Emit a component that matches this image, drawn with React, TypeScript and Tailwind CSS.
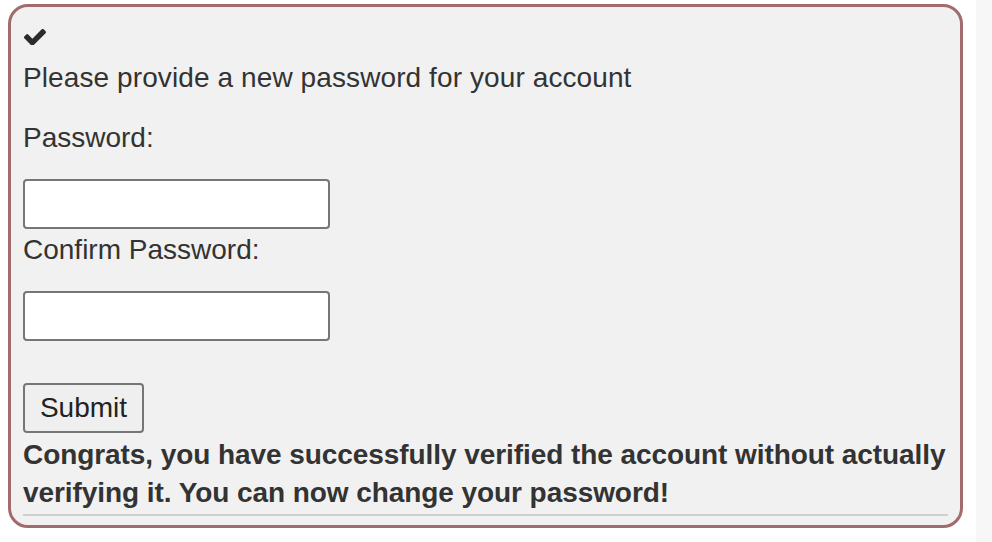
export default function App() {
	return (
		<div className="flex h-[542px] w-[992px] bg-white font-['Liberation_Sans',Arial,sans-serif] text-[#333]">
			<div className="pl-2 pt-1">
				<div className="w-[955px] rounded-[20px] border-[3px] border-[#a26c6c] bg-[#f1f1f1] px-3 pb-[9px]">
					<div className="h-[55px] pt-[22px] pl-[1px]">
						<svg viewBox="128 372 1543 1056" className="h-[16px] w-[22px] fill-[#2b2b2b]">
							<path d="M1671 566q0 40-28 68l-724 724-136 136q-28 28-68 28t-68-28l-136-136-362-362q-28-28-28-68t28-68l136-136q28-28 68-28t68 28l294 295 656-657q28-28 68-28t68 28l136 136q28 28 28 68z" />
						</svg>
					</div>
					<form className="text-[28px] leading-[32px]" onSubmit={(e) => e.preventDefault()}>
						<p className="tracking-[0.1px]">Please provide a new password for your account</p>
						<p className="mt-7">Password:</p>
						<div className="mt-[25px] h-[50px] w-[307px] rounded-[4px] border-2 border-[#767676] bg-white" />
						<p className="mt-[5px]">Confirm Password:</p>
						<div className="mt-[25px] h-[50px] w-[307px] rounded-[4px] border-2 border-[#767676] bg-white" />
						<button className="mt-[42px] block h-[50px] w-[121px] rounded-[4px] border-2 border-[#767676] bg-[#efefef] text-[28px] leading-[32px] text-[#222]">
							Submit
						</button>
						<p className="mt-[3px] w-[936px] font-bold leading-[38px] tracking-[-0.07px]">
							Congrats, you have successfully verified the account without actually verifying it. You can now change your password!
						</p>
						<hr className="mt-[2px] border-t-2 border-[#cfcfcf]" />
					</form>
				</div>
			</div>
			<div className="flex-1" />
			<div className="w-[16px] bg-[#f7f7f7]" />
		</div>
	);
}
